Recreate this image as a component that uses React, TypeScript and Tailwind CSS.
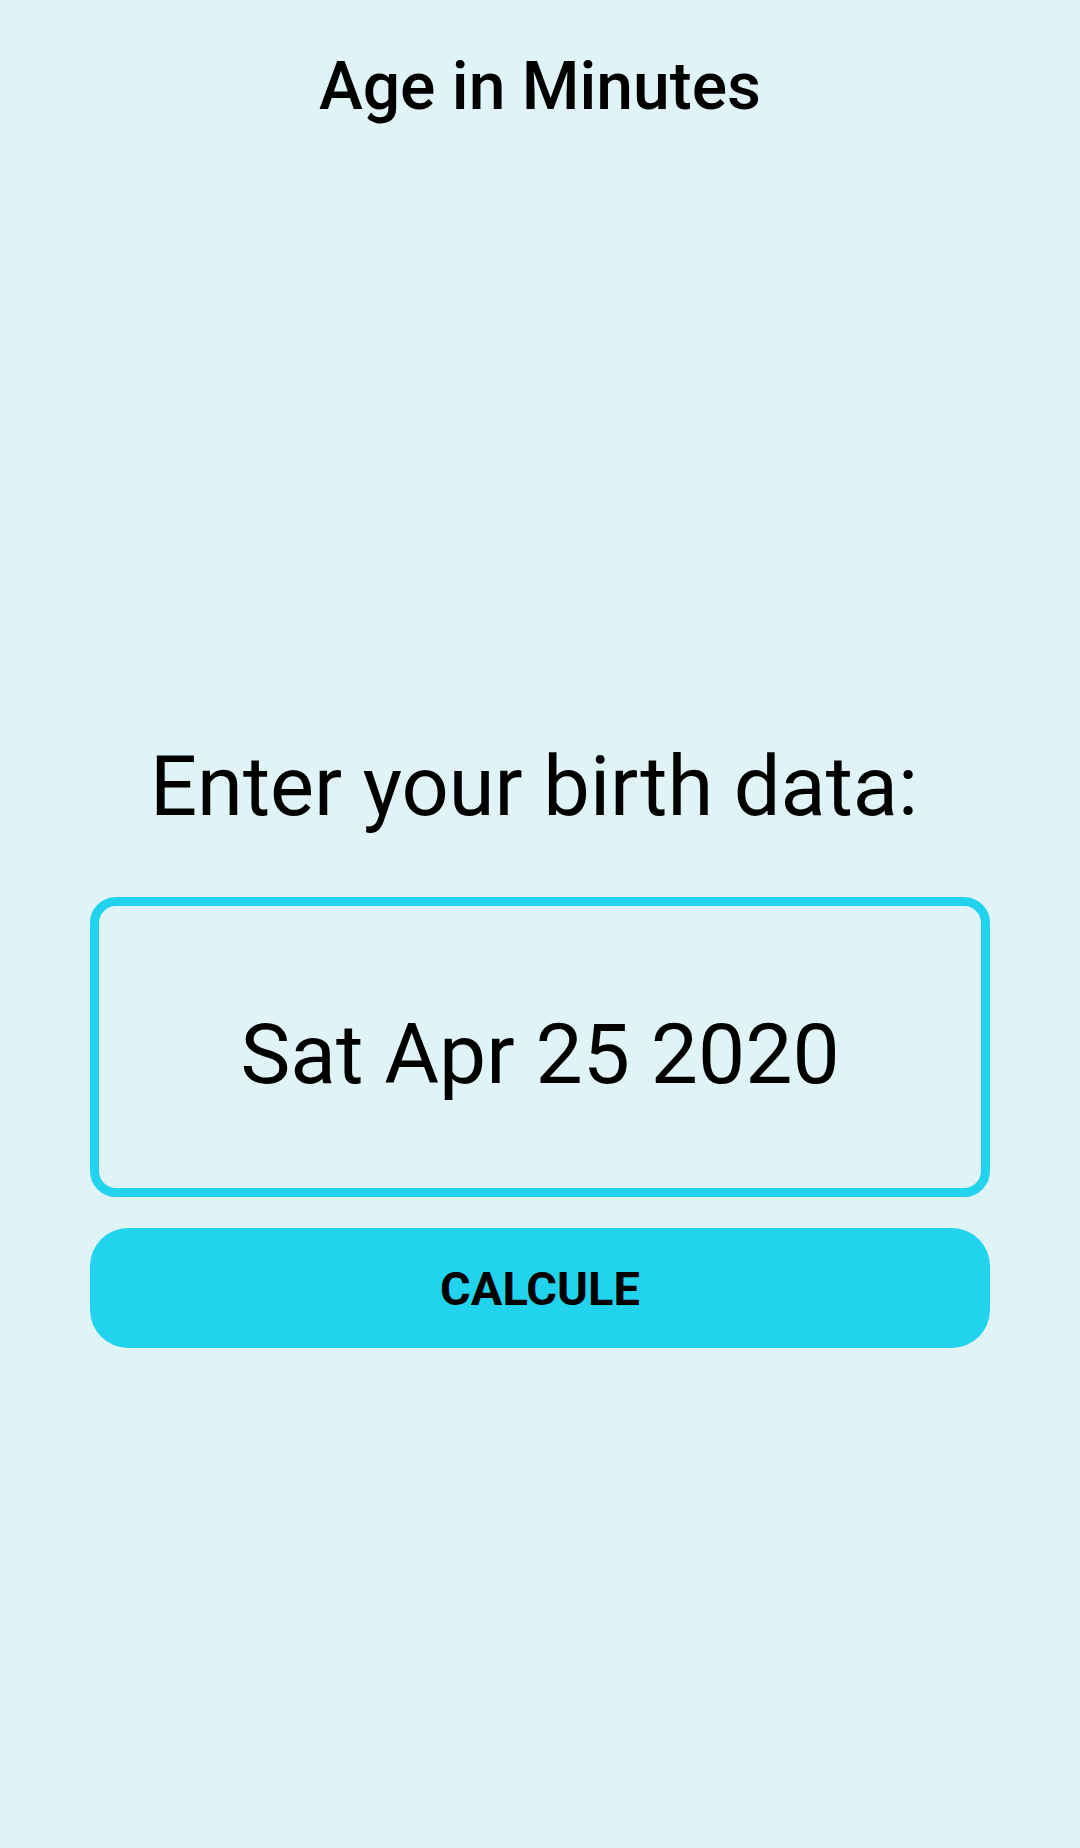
export default function App() {
  return (
    <div
      className="min-h-[1848px] w-full bg-[#e0f3f6] text-black"
      style={{ fontFamily: "Roboto, 'Noto Sans', sans-serif" }}
    >
      <div className="flex flex-col items-center px-[90px]">
        <h1 className="mt-[54px] text-[66px] leading-none font-medium">Age in Minutes</h1>

        <p className="mt-[625px] pr-[12px] text-[83px] leading-none font-normal">Enter your birth data:</p>

        <div className="mt-[69px] flex h-[300px] w-full items-center justify-center rounded-[26px] border-[9px] border-[#22d3ee] pt-4">
          <span className="text-[84px] leading-none">Sat Apr 25 2020</span>
        </div>

        <button className="mt-[31px] flex h-[120px] w-full items-center justify-center rounded-[38px] bg-[#22d3ee] text-[47px] leading-none font-bold">
          CALCULE
        </button>
      </div>
    </div>
  );
}
